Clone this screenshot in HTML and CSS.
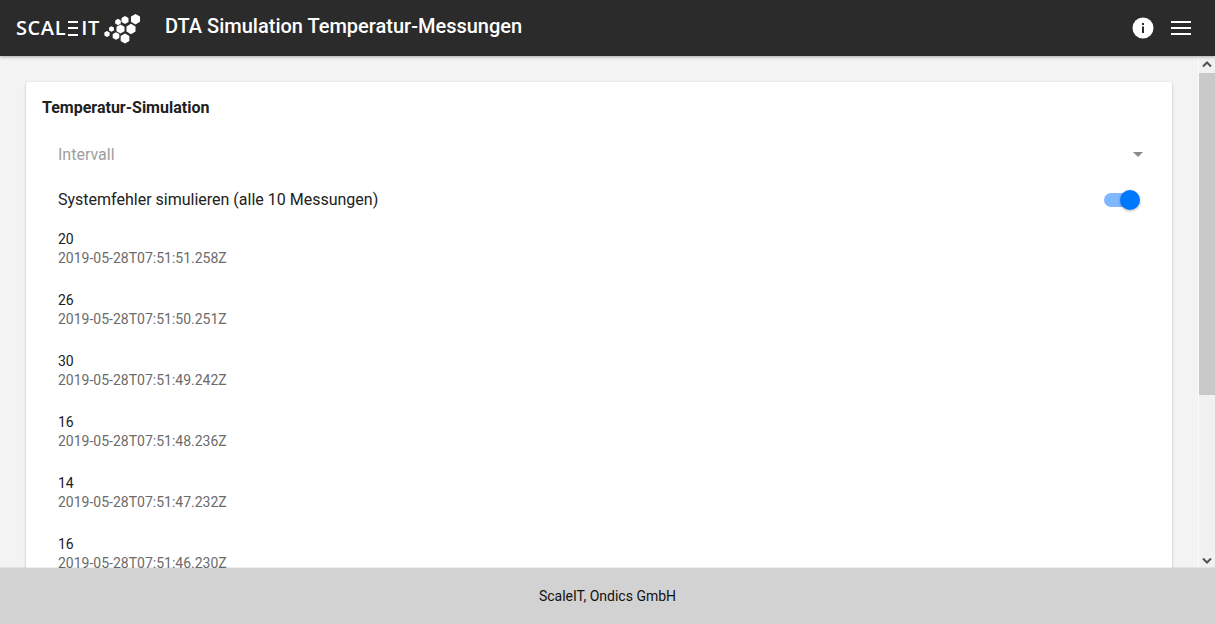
FILE: index.html
```html
<!DOCTYPE html>
<html lang="de">
<head>
<meta charset="utf-8">
<title>DTA Simulation Temperatur-Messungen</title>
<link rel="stylesheet" href="styles.css">
</head>
<body>
<div class="app">
  <header class="topbar">
    <div class="logo">
      <span class="logo-text">SCAL<span class="logo-e"><i></i><i></i><i></i></span>IT</span>
      <svg class="logo-mark" width="37" height="31" viewBox="0 0 37 31" aria-hidden="true">
        <defs><polygon id="hex" points="0,-1 .87,-.5 .87,.5 0,1 -.87,.5 -.87,-.5"/></defs>
        <g fill="#fff">
          <use href="#hex" transform="translate(31.500 6.200) scale(5.200)"/>
          <use href="#hex" transform="translate(27 16) scale(5.200)"/>
          <use href="#hex" transform="translate(21 25.500) scale(5)"/>
          <use href="#hex" transform="translate(21 7) scale(4)"/>
          <use href="#hex" transform="translate(14 9) scale(3.200)"/>
          <use href="#hex" transform="translate(16.500 16) scale(4.600)"/>
          <use href="#hex" transform="translate(12 23) scale(3.800)"/>
          <use href="#hex" transform="translate(7.500 16) scale(2.800)"/>
          <use href="#hex" transform="translate(3 21) scale(3)"/>
        </g>
      </svg>
    </div>
    <h1 class="title">DTA Simulation Temperatur-Messungen</h1>
    <div class="actions">
      <svg class="info" width="22" height="22" viewBox="0 0 22 22" aria-hidden="true">
        <circle cx="11" cy="11" r="10.500" fill="#fff"/>
        <rect x="10" y="9.500" width="2" height="6.500" fill="#2b2b2b"/>
        <rect x="10" y="6" width="2" height="2" fill="#2b2b2b"/>
      </svg>
      <div class="menu"><span></span><span></span><span></span></div>
    </div>
  </header>
  <div class="scroller">
    <main class="content">
      <section class="card">
        <h2 class="card-title">Temperatur-Simulation</h2>
        <div class="select-row">
          <span class="select-label">Intervall</span>
          <span class="caret"></span>
        </div>
        <div class="switch-row">
          <span>Systemfehler simulieren (alle 10 Messungen)</span>
          <span class="switch"><span class="track"></span><span class="thumb"></span></span>
        </div>
        <ul class="list">
          <li><div class="value">20</div><div class="time">2019-05-28T07:51:51.258Z</div></li>
          <li><div class="value">26</div><div class="time">2019-05-28T07:51:50.251Z</div></li>
          <li><div class="value">30</div><div class="time">2019-05-28T07:51:49.242Z</div></li>
          <li><div class="value">16</div><div class="time">2019-05-28T07:51:48.236Z</div></li>
          <li><div class="value">14</div><div class="time">2019-05-28T07:51:47.232Z</div></li>
          <li><div class="value">16</div><div class="time">2019-05-28T07:51:46.230Z</div></li>
        </ul>
      </section>
    </main>
    <div class="scrollbar">
      <svg class="arrow up" width="10" height="7" viewBox="0 0 10 7" aria-hidden="true"><path d="M1 5.500 5 1.500 9 5.500" fill="none" stroke="#505050" stroke-width="2"/></svg>
      <span class="sb-thumb"></span>
      <svg class="arrow down" width="10" height="7" viewBox="0 0 10 7" aria-hidden="true"><path d="M1 1.500 5 5.500 9 1.500" fill="none" stroke="#505050" stroke-width="2"/></svg>
    </div>
  </div>
  <footer class="footer">ScaleIT, Ondics GmbH</footer>
</div>
</body>
</html>
```
FILE: styles.css
```css
* { box-sizing: border-box; }
html, body { margin: 0; height: 100%; overflow: hidden; }
body { font-family: Roboto, "Liberation Sans", sans-serif; color: #212121; background: #f3f3f3; }
.app { height: 624px; display: flex; flex-direction: column; }
.topbar {
  height: 56px; flex: none; display: flex; align-items: center;
  background: #2b2b2b; color: #fff; padding: 0 24px 0 16px;
  box-shadow: 0 1px 3px rgba(0,0,0,.3); position: relative; z-index: 2;
}
.logo { display: flex; align-items: center; width: 149px; }
.logo-text { font-size: 20px; letter-spacing: .6px; font-weight: 600; display: flex; align-items: center; line-height: 1; font-family: "Open Sans", Roboto, sans-serif; }
.logo-e { display: inline-flex; flex-direction: column; justify-content: space-between; width: 10px; height: 15px; margin: 0 3px 0 2px; }
.logo-e i { display: block; height: 2px; background: #fff; }
.logo-mark { margin: 0 0 0 4px; }
.title { margin: 0; font-size: 20px; font-weight: 500; line-height: 1; position: relative; top: -2px; }
.actions { margin-left: auto; display: flex; align-items: center; gap: 17px; }
.info { display: block; }
.menu { width: 20px; display: flex; flex-direction: column; gap: 4px; }
.menu span { display: block; height: 2px; background: #fff; }
.scroller { flex: 1; min-height: 0; display: flex; overflow: hidden; }
.content { flex: 1; min-width: 0; padding: 26px 26px 0 26px; overflow: hidden; }
.card {
  background: #fff; border-radius: 2px; padding: 17px 16px 16px;
  box-shadow: 0 1px 3px rgba(0,0,0,.2), 0 1px 1px rgba(0,0,0,.14);
  height: 600px;
}
.card-title { margin: 0; font-size: 16px; font-weight: 700; line-height: 18px; color: #212121; }
.select-row { display: flex; align-items: center; justify-content: space-between; margin-top: 21px; padding: 0 0 0 16px; height: 32px; }
.select-label { font-size: 16px; color: #9e9e9e; }
.caret { width: 0; height: 0; border-left: 5px solid transparent; border-right: 5px solid transparent; border-top: 5px solid #8a8a8a; margin-right: 13px; }
.switch-row { display: flex; align-items: center; justify-content: space-between; margin-top: 13px; padding-left: 16px; height: 32px; font-size: 16px; color: #212121; }
.switch { position: relative; width: 36px; height: 20px; margin: 2px 16px 0 0; display: block; }
.track { position: absolute; left: 0; top: 3px; width: 34px; height: 14px; border-radius: 7px; background: #80b8ff; }
.thumb { position: absolute; right: 0; top: 0; width: 20px; height: 20px; border-radius: 50%; background: #0077ff; box-shadow: 0 1px 3px rgba(0,0,0,.3); }
.list { list-style: none; margin: 15px 0 0; padding: 0 0 0 16px; }
.list li { height: 61px; }
.value { font-size: 14px; line-height: 19px; color: #212121; }
.time { font-size: 14px; line-height: 19px; color: #6b6b6b; }
.scrollbar { flex: none; width: 17px; background: #f1f1f1; border-left: 1px solid #fbfbfb; position: relative; }
.sb-thumb { position: absolute; left: 0; right: 0; top: 17px; height: 322px; background: #c9c9c9; }
.arrow { position: absolute; left: 3px; }
.arrow.up { top: 5px; }
.arrow.down { bottom: 4px; }
.footer { height: 56px; flex: none; background: #d2d2d2; display: flex; align-items: center; justify-content: center; font-size: 14px; color: #111; position: relative; z-index: 2; box-shadow: 0 -1px 1px rgba(0,0,0,.06); }
```
